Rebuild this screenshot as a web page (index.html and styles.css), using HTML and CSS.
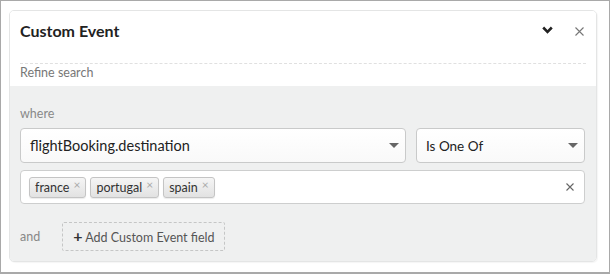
FILE: index.html
```html
<!DOCTYPE html>
<html lang="en">
    <head>
        <meta charset="UTF-8">
        <title>Custom Event</title>
        <link rel="stylesheet" href="styles.css">
    </head>
    <body>
        <div class="frame">
            <section class="card">
                <header class="card-head">
                    <div class="title-row">
                        <h1>Custom Event</h1>
                        <div class="head-actions">
                            <svg class="chevron" width="11" height="8" viewBox="0 0 11 8"><path d="M1.2 1.5 L5.5 5.8 L9.8 1.5" fill="none" stroke="#222" stroke-width="2.6"/></svg>
                            <svg class="close" width="9" height="9" viewBox="0 0 9 9"><path d="M0.5 0.5 L8.5 8.5 M8.5 0.5 L0.5 8.5" stroke="#777" stroke-width="1.1"/></svg>
                        </div>
                    </div>
                    <div class="refine">Refine search</div>
                </header>
                <div class="card-body">
                    <div class="label">where</div>
                    <div class="select-row">
                        <div class="select select-field">
                            <span>flightBooking.destination</span>
                            <span class="caret"></span>
                        </div>
                        <div class="select select-op">
                            <span>Is One Of</span>
                            <span class="caret"></span>
                        </div>
                    </div>
                    <div class="tags">
                        <span class="tag">france<i>&times;</i></span>
                        <span class="tag">portugal<i>&times;</i></span>
                        <span class="tag">spain<i>&times;</i></span>
                        <svg class="clear" width="8" height="8" viewBox="0 0 8 8"><path d="M0.5 0.5 L7.5 7.5 M7.5 0.5 L0.5 7.5" stroke="#666" stroke-width="1.1"/></svg>
                    </div>
                    <div class="and-row">
                        <span class="label">and</span>
                        <button class="add-field"><b>+</b> Add Custom Event field</button>
                    </div>
                </div>
            </section>
        </div>
    </body>
</html>
```

FILE: styles.css
```css
* {
    box-sizing: border-box;
}
body {
    margin: 0;
    font-family: Lato, "Open Sans", sans-serif;
    color: #333;
    background-color: white;
}
.frame {
    width: 610px;
    height: 274px;
    border: 1px solid #a9a9a9;
    border-bottom-width: 2px;
    padding: 9px 12px 11px 8px;
}
.card {
    height: 252px;
    border: 1px solid #e4e5e5;
    border-radius: 5px;
    box-shadow: 1px 1px 1px rgba(0, 0, 0, 0.04);
    overflow: hidden;
    display: flex;
    flex-direction: column;
}
.card-head {
    background-color: white;
    padding: 0 10px;
    height: 75px;
}
.title-row {
    display: flex;
    justify-content: space-between;
    align-items: flex-start;
    height: 53px;
    padding-top: 10px;
    border-bottom: 1px dashed #e0e0e0;
}
.title-row h1 {
    margin: 0;
    font-size: 16px;
    line-height: 20px;
    font-weight: 700;
    color: #222;
}
.head-actions {
    display: flex;
    align-items: center;
    height: 20px;
    gap: 22px;
    padding-right: 2px;
}
.chevron {
    margin-top: -2px;
}
.refine {
    font-size: 12.5px;
    line-height: 15px;
    color: #777;
    padding-top: 1px;
}
.card-body {
    flex: 1;
    background-color: #eff0f0;
    padding: 20px 11px 0 10px;
}
.label {
    font-size: 12.5px;
    line-height: 16px;
    color: #888;
}
.select-row {
    display: flex;
    gap: 10px;
    margin-top: 6px;
}
.select {
    height: 35px;
    border: 1px solid #c9caca;
    border-radius: 4px;
    background: linear-gradient(#ffffff, #f9f9f9);
    display: flex;
    align-items: center;
    justify-content: space-between;
    padding: 0 6px 0 9px;
    font-size: 14.5px;
    color: #222;
}
.select-field {
    width: 386px;
}
.select-op {
    flex: 1;
    font-size: 13.5px;
}
.caret {
    width: 0;
    height: 0;
    border-left: 5px solid transparent;
    border-right: 5px solid transparent;
    border-top: 5px solid #666;
}
.tags {
    margin-top: 7px;
    height: 34px;
    background-color: white;
    border: 1px solid #cdcece;
    border-radius: 4px;
    display: flex;
    align-items: center;
    gap: 4px;
    padding: 0 10px 0 8px;
}
.tag {
    height: 21px;
    display: flex;
    align-items: center;
    padding: 0 5px 0 5px;
    font-size: 12.5px;
    color: #333;
    border: 1px solid #c4c4c4;
    border-radius: 3px;
    background: linear-gradient(#f5f5f5, #e2e2e2);
    box-shadow: 0 1px 1px rgba(0, 0, 0, 0.08);
}
.tag i {
    font-style: normal;
    color: #aaa;
    font-size: 12px;
    margin-left: 4px;
    margin-top: -5px;
}
.clear {
    margin-left: auto;
}
.and-row {
    display: flex;
    align-items: center;
    gap: 22px;
    margin-top: 18px;
}
.add-field {
    height: 29px;
    border: 1px dashed #c5c6c6;
    border-radius: 2px;
    background: transparent;
    font-family: inherit;
    font-size: 12.5px;
    color: #555;
    padding: 0 9px 0 10px;
    white-space: nowrap;
}
.add-field b {
    font-size: 16px;
    color: #333;
    line-height: 1;
}
```
